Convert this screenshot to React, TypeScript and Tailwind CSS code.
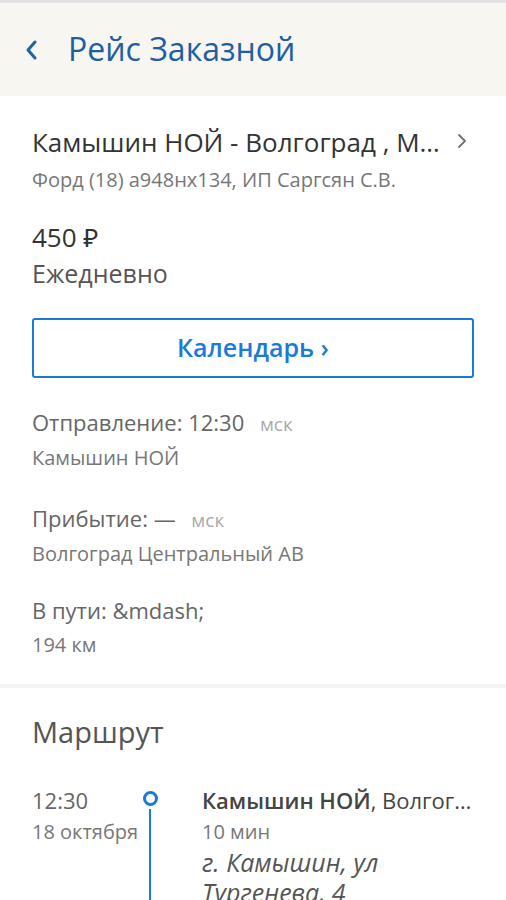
import React from 'react';

const font = { fontFamily: '"Open Sans", "Noto Sans", sans-serif' };

export default function App() {
  return (
    <div className="w-[506px] h-[900px] overflow-hidden bg-white" style={font}>
      {/* Header */}
      <header className="h-[96px] bg-[#f7f6f1] flex items-center border-t-[3px] border-[#e2e2e2]">
        <svg className="ml-[24px] w-[14px] h-[22px]" viewBox="0 0 14 22" fill="none">
          <path d="M11 3 L4 11 L11 19" stroke="#1e63a8" strokeWidth="3" strokeLinecap="round" strokeLinejoin="round" />
        </svg>
        <h1 className="ml-[30px] text-[32px] leading-none text-[#1e5fa3] mb-[2px]">Рейс Заказной</h1>
      </header>

      {/* Trip summary */}
      <section className="px-[32px] pt-[29px] pb-[25px] border-b-4 border-[#f4f4f4]">
        <div className="flex items-start">
          <div className="min-w-0 flex-1">
            <div className="text-[26px] leading-[34px] text-[#333] truncate font-medium">
              Камышин НОЙ - Волгоград , Москва
            </div>
            <div className="text-[20px] leading-[28px] text-[#777] mt-[7px]">Форд (18) а948нх134, ИП Саргсян С.В.</div>
          </div>
          <svg className="ml-[12px] mt-[8px] w-[10px] h-[16px] mr-[7px]" viewBox="0 0 10 16" fill="none">
            <path d="M2 2 L8 8 L2 14" stroke="#707070" strokeWidth="1.8" strokeLinecap="round" strokeLinejoin="round" />
          </svg>
        </div>

        <div className="mt-[26px] text-[26px] leading-[34px] text-[#333]">450 ₽</div>
        <div className="mt-[2px] text-[25px] leading-[34px] text-[#555]">Ежедневно</div>

        <button className="mt-[28px] w-full h-[60px] border-2 border-[#1a7bd6] rounded-[3px] flex items-center justify-center text-[25px] font-semibold text-[#1a7bd6]">
          Календарь ›
        </button>

        <div className="mt-[29px] text-[22px] leading-[30px] text-[#666]">
          Отправление: 12:30 <span className="ml-[10px] text-[19px] text-[#aaa]">мск</span>
        </div>
        <div className="mt-[5px] text-[20px] leading-[28px] text-[#777]">Камышин НОЙ</div>

        <div className="mt-[31px] text-[22px] leading-[30px] text-[#666]">
          Прибытие: — <span className="ml-[10px] text-[19px] text-[#aaa]">мск</span>
        </div>
        <div className="mt-[5px] text-[20px] leading-[28px] text-[#777]">Волгоград Центральный АВ</div>

        <div className="mt-[27px] text-[22px] leading-[30px] text-[#666]">В пути: &amp;mdash;</div>
        <div className="mt-[6px] text-[20px] leading-[28px] text-[#777]">194 км</div>
      </section>

      {/* Route */}
      <section className="px-[32px] pt-[25px]">
        <h2 className="text-[29px] leading-[38px] text-[#555]">Маршрут</h2>
        <div className="mt-[34px] flex">
          <div className="w-[110px] shrink-0">
            <div className="text-[22px] leading-[30px] text-[#666]">12:30</div>
            <div className="mt-[3px] text-[20px] leading-[28px] text-[#777]">18 октября</div>
          </div>
          <div className="w-[16px] flex flex-col items-center shrink-0 mt-[6px]">
            <div className="w-[15px] h-[15px] rounded-full border-[3.5px] border-[#1a7bd6]" />
            <div className="w-[2px] h-[200px] bg-[#1a7bd6] mt-[3px]" />
          </div>
          <div className="ml-[44px] min-w-0 flex-1">
            <div className="text-[22px] leading-[30px] text-[#444] truncate">
              <span className="font-semibold">Камышин НОЙ</span>, Волгоградская область
            </div>
            <div className="mt-[3px] text-[20px] leading-[28px] text-[#777]">10 мин</div>
            <div className="mt-[1px] text-[25px] leading-[30px] italic text-[#555] w-[240px]">г. Камышин, ул Тургенева, 4</div>
          </div>
        </div>
      </section>
    </div>
  );
}
